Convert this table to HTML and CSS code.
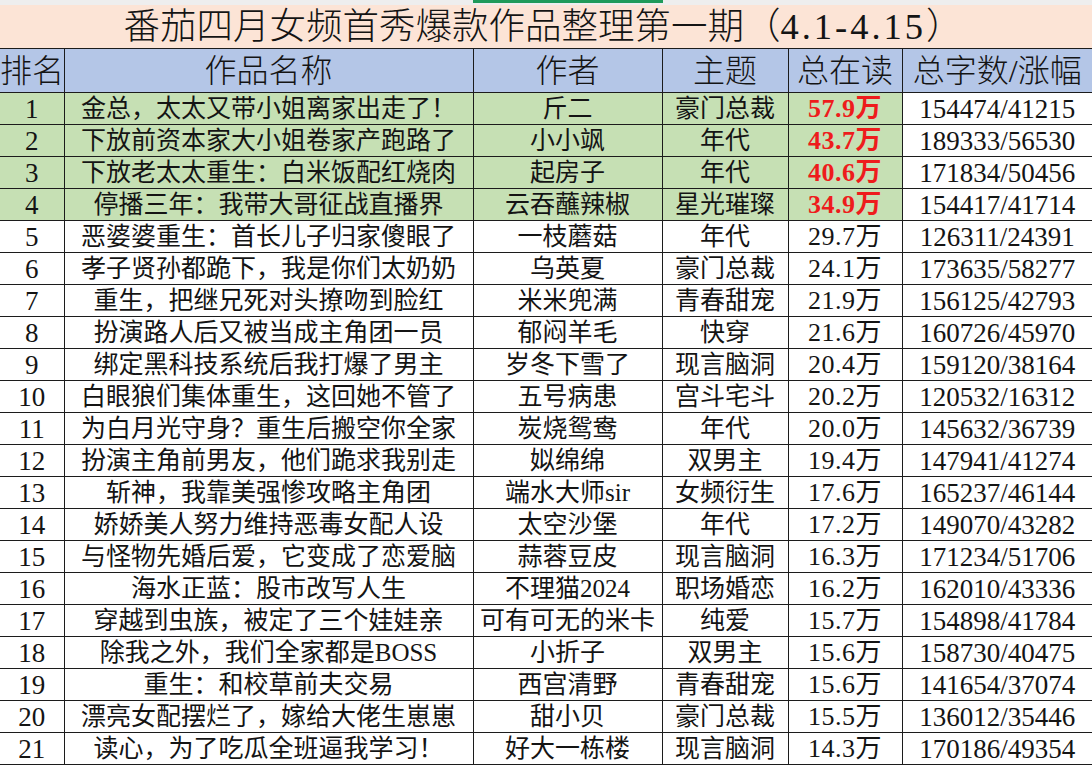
FILE: index.html
```html
<!DOCTYPE html>
<html lang="zh-CN">
<head>
<meta charset="utf-8">
<title>番茄四月女频首秀爆款作品整理第一期</title>
<link rel="stylesheet" href="styles.css">
</head>
<body>
<div class="topbar"><span class="tab"></span></div>
<div class="title">番茄四月女频首秀爆款作品整理第一期（<span class="latin">4.1-4.15</span>）</div>
<table class="sheet">
  <colgroup>
    <col class="w-rank"><col class="w-name"><col class="w-author"><col class="w-theme"><col class="w-read"><col class="w-words">
  </colgroup>
  <thead>
    <tr><th>排名</th><th>作品名称</th><th>作者</th><th>主题</th><th>总在读</th><th>总字数/涨幅</th></tr>
  </thead>
  <tbody>
    <tr class="hot"><td>1</td><td>金总，太太又带小姐离家出走了！</td><td>斤二</td><td>豪门总裁</td><td class="red">57.9万</td><td class="plain">154474/41215</td></tr>
    <tr class="hot"><td>2</td><td>下放前资本家大小姐卷家产跑路了</td><td>小小飒</td><td>年代</td><td class="red">43.7万</td><td class="plain">189333/56530</td></tr>
    <tr class="hot"><td>3</td><td>下放老太太重生：白米饭配红烧肉</td><td>起房子</td><td>年代</td><td class="red">40.6万</td><td class="plain">171834/50456</td></tr>
    <tr class="hot"><td>4</td><td>停播三年：我带大哥征战直播界</td><td>云吞蘸辣椒</td><td>星光璀璨</td><td class="red">34.9万</td><td class="plain">154417/41714</td></tr>
    <tr><td>5</td><td>恶婆婆重生：首长儿子归家傻眼了</td><td>一枝蘑菇</td><td>年代</td><td>29.7万</td><td>126311/24391</td></tr>
    <tr><td>6</td><td>孝子贤孙都跪下，我是你们太奶奶</td><td>乌英夏</td><td>豪门总裁</td><td>24.1万</td><td>173635/58277</td></tr>
    <tr><td>7</td><td>重生，把继兄死对头撩吻到脸红</td><td>米米兜满</td><td>青春甜宠</td><td>21.9万</td><td>156125/42793</td></tr>
    <tr><td>8</td><td>扮演路人后又被当成主角团一员</td><td>郁闷羊毛</td><td>快穿</td><td>21.6万</td><td>160726/45970</td></tr>
    <tr><td>9</td><td>绑定黑科技系统后我打爆了男主</td><td>岁冬下雪了</td><td>现言脑洞</td><td>20.4万</td><td>159120/38164</td></tr>
    <tr><td>10</td><td>白眼狼们集体重生，这回她不管了</td><td>五号病患</td><td>宫斗宅斗</td><td>20.2万</td><td>120532/16312</td></tr>
    <tr><td>11</td><td>为白月光守身？重生后搬空你全家</td><td>炭烧鸳鸯</td><td>年代</td><td>20.0万</td><td>145632/36739</td></tr>
    <tr><td>12</td><td>扮演主角前男友，他们跪求我别走</td><td>姒绵绵</td><td>双男主</td><td>19.4万</td><td>147941/41274</td></tr>
    <tr><td>13</td><td>斩神，我靠美强惨攻略主角团</td><td>端水大师sir</td><td>女频衍生</td><td>17.6万</td><td>165237/46144</td></tr>
    <tr><td>14</td><td>娇娇美人努力维持恶毒女配人设</td><td>太空沙堡</td><td>年代</td><td>17.2万</td><td>149070/43282</td></tr>
    <tr><td>15</td><td>与怪物先婚后爱，它变成了恋爱脑</td><td>蒜蓉豆皮</td><td>现言脑洞</td><td>16.3万</td><td>171234/51706</td></tr>
    <tr><td>16</td><td>海水正蓝：股市改写人生</td><td>不理猫2024</td><td>职场婚恋</td><td>16.2万</td><td>162010/43336</td></tr>
    <tr><td>17</td><td>穿越到虫族，被定了三个娃娃亲</td><td>可有可无的米卡</td><td>纯爱</td><td>15.7万</td><td>154898/41784</td></tr>
    <tr><td>18</td><td>除我之外，我们全家都是BOSS</td><td>小折子</td><td>双男主</td><td>15.6万</td><td>158730/40475</td></tr>
    <tr><td>19</td><td>重生：和校草前夫交易</td><td>西宫清野</td><td>青春甜宠</td><td>15.6万</td><td>141654/37074</td></tr>
    <tr><td>20</td><td>漂亮女配摆烂了，嫁给大佬生崽崽</td><td>甜小贝</td><td>豪门总裁</td><td>15.5万</td><td>136012/35446</td></tr>
    <tr><td>21</td><td>读心，为了吃瓜全班逼我学习！</td><td>好大一栋楼</td><td>现言脑洞</td><td>14.3万</td><td>170186/49354</td></tr>
  </tbody>
</table>
</body>
</html>
```
FILE: styles.css
```css
html, body {
  margin: 0;
  padding: 0;
  background: #ffffff;
}

body {
  width: 1092px;
  font-family: "Liberation Serif", "Noto Sans CJK SC", serif;
  color: #141414;
  overflow: hidden;
}

.topbar {
  height: 5px;
  background: #eeeeee;
  padding-left: 473px;
  box-sizing: border-box;
}

.tab {
  display: block;
  width: 190px;
  height: 3px;
  background: #1f9a5a;
}

.title {
  height: 43px;
  background: #fce4d6;
  font-size: 36.5px;
  line-height: 43px;
  text-align: center;
  padding-right: 6px;
  white-space: nowrap;
  font-weight: 300;
}

.title .latin {
  letter-spacing: 3px;
}

.sheet {
  border-collapse: collapse;
  table-layout: fixed;
  width: 1092px;
}

.w-rank { width: 64px; }
.w-name { width: 409px; }
.w-author { width: 189px; }
.w-theme { width: 126px; }
.w-read { width: 114px; }
.w-words { width: 190px; }

.sheet th,
.sheet td {
  border: 1px solid #1c1c1c;
  padding: 0;
  text-align: center;
  white-space: nowrap;
  overflow: hidden;
  font-weight: 400;
}

.sheet th:first-child,
.sheet td:first-child {
  border-left: none;
}

.sheet th:last-child,
.sheet td:last-child {
  border-right: none;
}

.sheet th {
  height: 43px;
  background: #b4c6e7;
  font-size: 32px;
  line-height: 40px;
  font-weight: 300;
}

.sheet td {
  height: 31px;
  font-size: 25px;
  line-height: 30px;
}

.sheet td:first-child {
  font-size: 27px;
}

.sheet td:nth-child(5) {
  font-size: 26px;
  letter-spacing: 0.5px;
}

.sheet td:nth-child(6) {
  font-size: 27px;
}

.sheet tr.hot td {
  background: #c6e0b4;
}

.sheet tr.hot td.plain {
  background: #ffffff;
}

.sheet td.red {
  color: #ee1c1c;
  font-weight: 700;
}
```
